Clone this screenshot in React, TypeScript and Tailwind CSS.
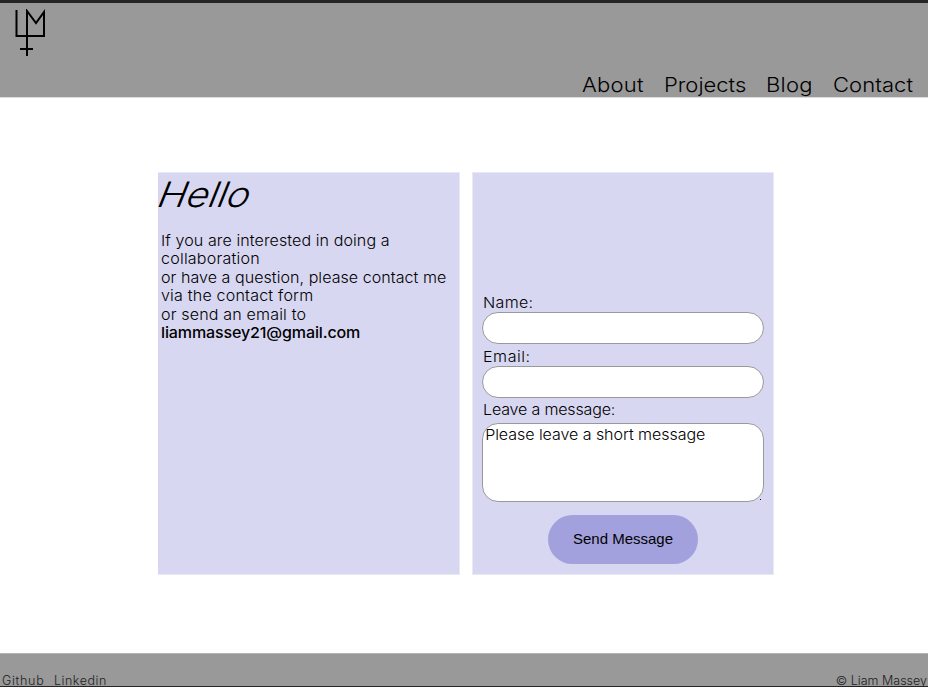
const navLinks = [
  { label: 'About', width: 'w-[62px]', tracking: 'tracking-[0.2px]' },
  { label: 'Projects', width: 'w-[82px]', tracking: 'tracking-[0px]' },
  { label: 'Blog', width: 'w-[46.5px]', tracking: 'tracking-[0.25px]' },
  { label: 'Contact', width: 'w-[81px]', tracking: 'tracking-[0.05px]' },
];

const introLines = [
  { text: 'If you are interested in doing a', style: 'tracking-[0.08px]' },
  { text: 'collaboration', style: 'tracking-[0.2px]' },
  { text: 'or have a question, please contact me', style: 'tracking-[0.04px]' },
  { text: 'via the contact form', style: 'tracking-[0.18px]' },
  { text: 'or send an email to', style: 'tracking-[0.15px]' },
  { text: 'liammassey21@gmail.com', style: 'font-medium tracking-[-0.13px]' },
];

function Logo() {
  return (
    <svg className="mt-1.5 ml-3 h-12 w-9" viewBox="12 9 36 48" fill="none" stroke="#000" strokeWidth="2">
      <path d="M16.5 10V36H44V12L36 23L27 11V56M20 49H33" />
    </svg>
  );
}

function Header() {
  return (
    <header className="flex h-[98px] items-stretch justify-between border-t-3 border-b border-t-[#252525] border-b-[#dcdcdc] bg-[#999]">
      <Logo />
      <nav className="flex items-end gap-5 pr-[14.5px] text-[20px] leading-6">
        {navLinks.map((link) => (
          <a key={link.label} href="#" className={link.width}>
            <span className={`inline-block origin-left scale-x-[1.1] ${link.tracking}`}>{link.label}</span>
          </a>
        ))}
      </nav>
    </header>
  );
}

function Intro() {
  return (
    <section className="w-[302px] border-y border-r border-[#e9e8f7] bg-[#d8d7f1]">
      <h1 className="ml-[6px] inline-block origin-center [transform:scaleX(1.1)_skewX(-20deg)] text-[35px] leading-[42px]">Hello</h1>
      <div className="mt-[16.6px] ml-[2.5px] origin-left scale-x-[1.07] text-[15px] leading-[18.5px] whitespace-nowrap">
        {introLines.map((line) => (
          <p key={line.text} className={line.style}>{line.text}</p>
        ))}
      </div>
    </section>
  );
}

function ContactForm() {
  return (
    <form className="flex w-[302px] flex-col border border-[#e9e8f7] bg-[#d8d7f1] px-[9px] pt-[120.5px] text-[15px] leading-[18.5px]">
      <label className="ml-[0.6px] origin-left scale-x-[1.07] tracking-[0.3px]">Name:</label>
      <input className="h-8 rounded-[16px] border border-[#999] bg-white px-3 outline-none" />
      <label className="mt-[3.5px] ml-[0.6px] origin-left scale-x-[1.07] tracking-[0.5px]">Email:</label>
      <input className="-mt-[0.5px] h-8 rounded-[16px] border border-[#999] bg-white px-3 outline-none" />
      <label className="mt-[3px] ml-[0.6px] origin-left scale-x-[1.07] tracking-[-0.17px]">Leave a message:</label>
      <div className="relative mt-[3.5px] h-[79px] rounded-[16px] border border-[#999] bg-white">
        <textarea
          className="block h-full w-[260px] origin-left scale-x-[1.07] resize-none bg-transparent px-0.5 pt-[2.5px] tracking-[-0.06px] outline-none"
          defaultValue="Please leave a short message"
        />
        <span className="absolute right-[2px] bottom-[1px] size-px bg-black" />
      </div>
      <button
        type="button"
        className="mt-[13px] h-[49.5px] w-[150.5px] self-center rounded-[25px] bg-[#a2a1de] font-['Liberation_Sans',sans-serif] text-[15px] font-normal"
      >
        Send Message
      </button>
    </form>
  );
}

function Footer() {
  return (
    <footer className="flex h-[34px] justify-between overflow-hidden border-t border-b border-t-[#b4b4b4] border-b-[#252525] bg-[#999] pt-[18.5px] pr-px pl-0.5 text-[12.5px] leading-[15px] text-[#222]">
      <div className="flex gap-[9.5px]">
        <a href="#" className="tracking-[0.7px]">Github</a>
        <a href="#" className="tracking-[0.55px]">Linkedin</a>
      </div>
      <p>© Liam Massey</p>
    </footer>
  );
}

export default function App() {
  return (
    <div className="flex h-[687px] w-[928px] flex-col bg-white font-[Inter,sans-serif] font-light text-black">
      <Header />
      <main className="flex flex-1 items-start pt-[74px] pl-[158px]">
        <div className="flex h-[403px] gap-3">
          <Intro />
          <ContactForm />
        </div>
      </main>
      <Footer />
    </div>
  );
}
